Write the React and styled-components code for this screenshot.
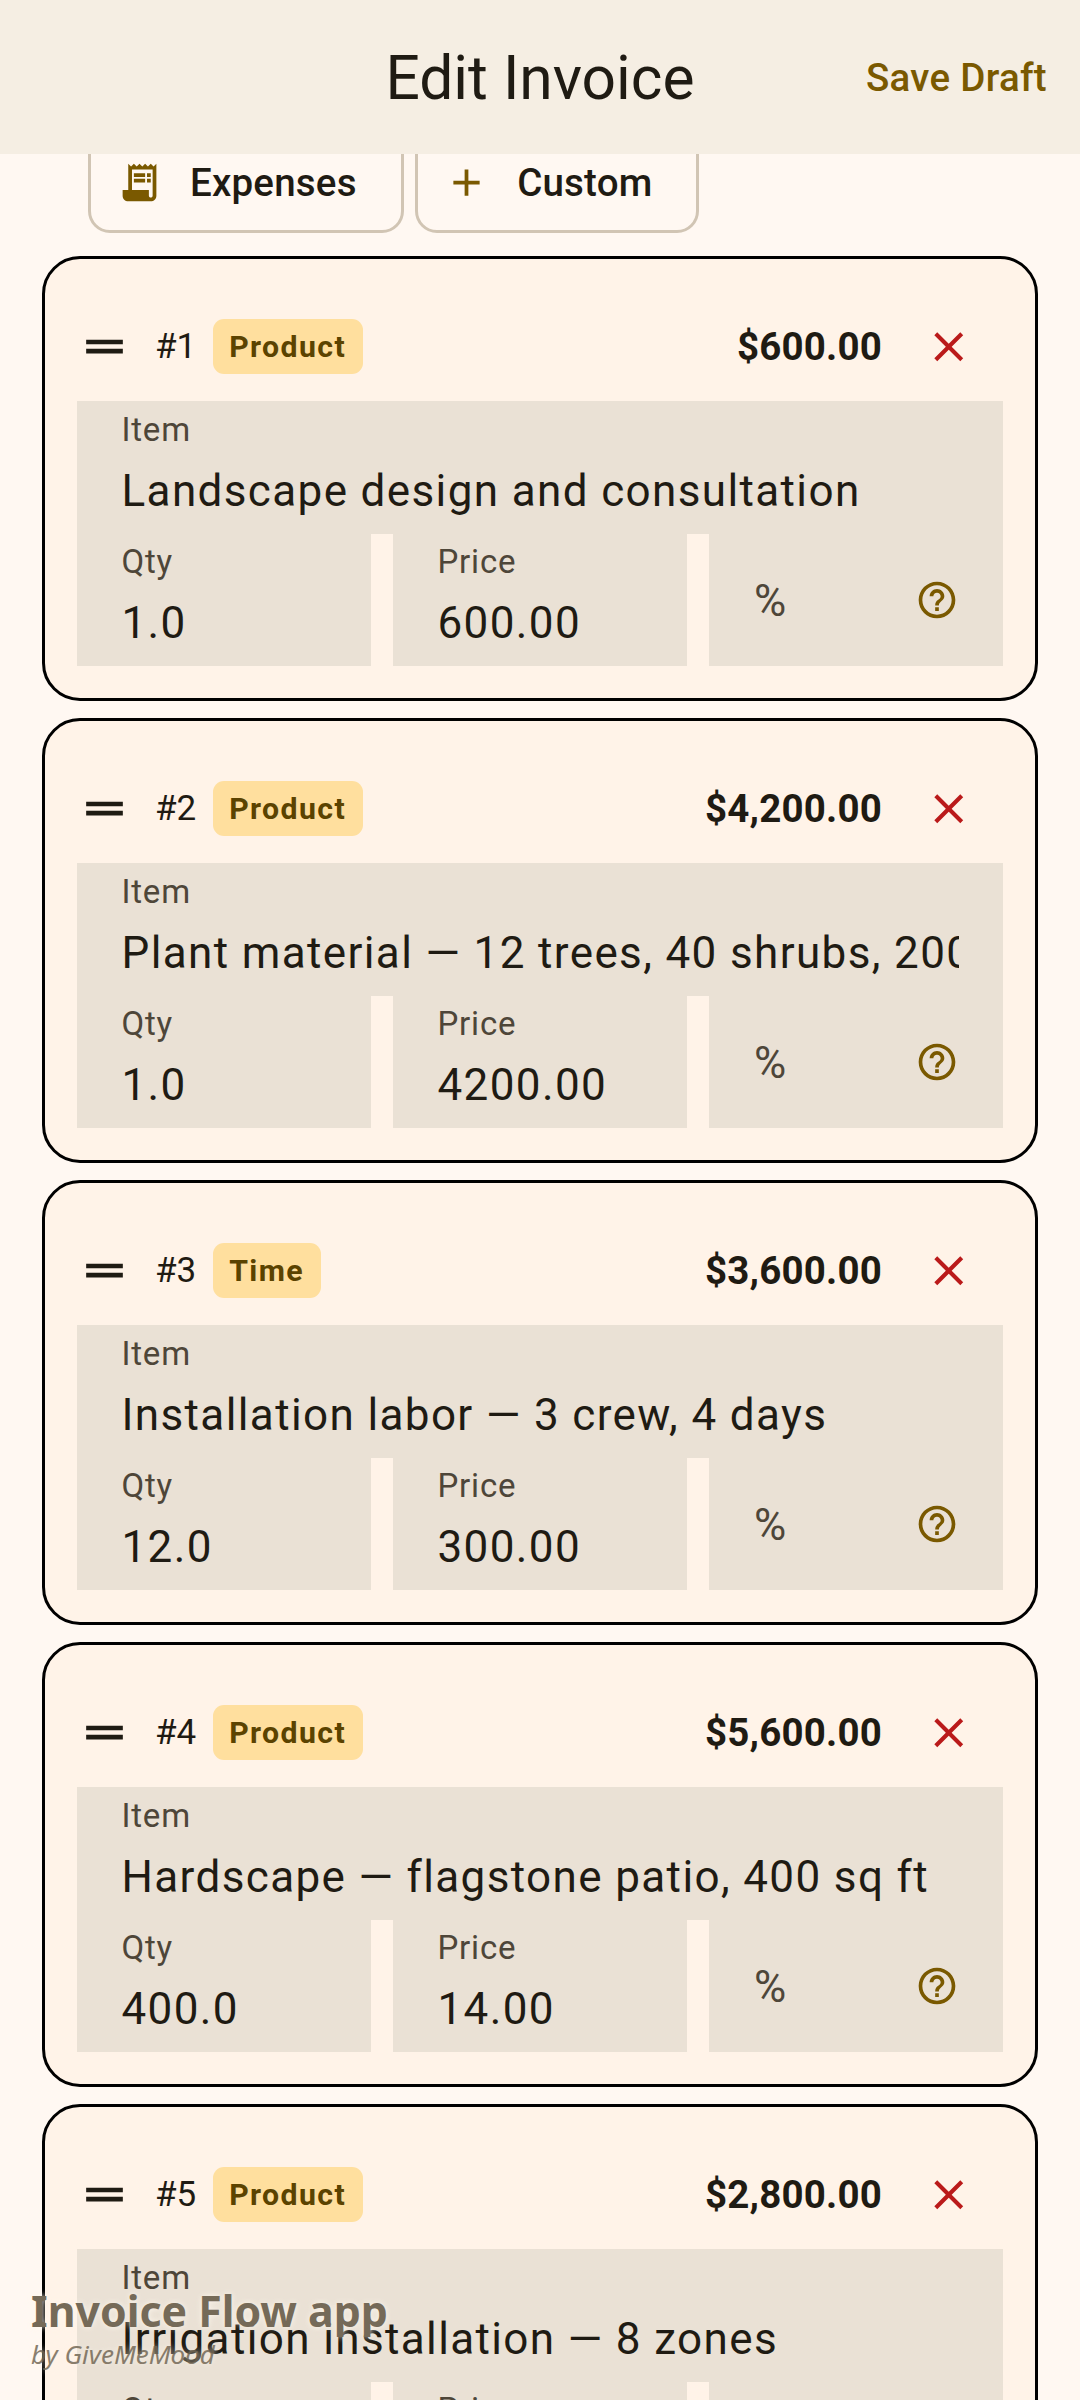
import React from "react";
import styled, { createGlobalStyle } from "styled-components";

const Global = createGlobalStyle`
  html, body { margin: 0; padding: 0; background: #fff8f2; }
  body { width: 1080px; height: 2400px; overflow: hidden; font-family: Roboto, "Liberation Sans", sans-serif; color: #1f1b13; }
  #root { height: 2400px; }
`;

const Screen = styled.div`
  position: relative;
  width: 1080px;
  height: 2400px;
  overflow: hidden;
  background: #fff8f2;
`;

const TopBar = styled.header`
  position: relative;
  z-index: 2;
  height: 154px;
  background: #f5eee3;
  display: flex;
  align-items: center;
  justify-content: center;
`;

const Title = styled.h1`
  margin: 3px 0 0;
  font-size: 60.5px;
  font-weight: 400;
  line-height: 72px;
  color: #1f1b13;
`;

const SaveDraft = styled.span`
  position: absolute;
  right: 33px;
  top: 1px;
  line-height: 154px;
  font-size: 38.5px;
  font-weight: 500;
  letter-spacing: 0.3px;
  color: #7a5900;
`;

const Chips = styled.div`
  display: flex;
  gap: 11.5px;
  margin: -22px 0 0 88px;
`;

const Chip = styled.div`
  height: 101px;
  box-sizing: border-box;
  border: 3px solid #d1c5b4;
  border-radius: 22px;
  display: flex;
  align-items: center;
  gap: 28px;
  padding: 0 44px 0 26px;
  font-size: 38.5px;
  font-weight: 500;
  letter-spacing: 0.2px;
  color: #1f1b13;
  background: #fff8f2;
`;

const List = styled.main`
  display: flex;
  flex-direction: column;
  gap: 17px;
  margin: 23px 42px 0;
`;

const Card = styled.section`
  box-sizing: border-box;
  height: 445px;
  border: 3px solid #000;
  border-radius: 38px;
  background: #fff3e8;
  padding: 0 32px;
  flex: none;
`;

const CardHead = styled.div`
  height: 142px;
  display: flex;
  align-items: center;
  padding-top: 33px;
  box-sizing: border-box;
`;

const Handle = styled.svg`
  width: 55px;
  height: 55px;
  fill: #1f1b13;
  flex: none;
`;

const Index = styled.span`
  margin-left: 23px;
  font-size: 35px;
  font-weight: 400;
  color: #1f1b13;
`;

const Badge = styled.span`
  margin-left: 16.5px;
  height: 55px;
  padding: 0 16.5px;
  border-radius: 11px;
  background: #ffdf9e;
  display: flex;
  align-items: center;
  font-size: 30.25px;
  font-weight: 700;
  letter-spacing: 1.375px;
  color: #5b4300;
`;

const Amount = styled.span`
  margin-left: auto;
  font-size: 38.5px;
  font-weight: 700;
  letter-spacing: 0.2px;
  color: #1f1b13;
`;

const Remove = styled.svg`
  width: 49.5px;
  height: 49.5px;
  margin: 0 30px 0 41.5px;
  fill: #ba1a1a;
  flex: none;
`;

const ItemField = styled.div`
  height: 133px;
  box-sizing: border-box;
  padding: 7px 44px 0 44.5px;
  background: #eae1d5;
  overflow: hidden;
`;

const Row = styled.div`
  display: grid;
  grid-template-columns: repeat(3, 294px);
  gap: 22px;
  height: 132px;
`;

const Cell = styled.div`
  box-sizing: border-box;
  padding: 6px 44px 0 44.5px;
  background: #eae1d5;
  overflow: hidden;
`;

const PercentCell = styled(Cell)`
  padding: 2px 44px 0 45px;
  display: flex;
  align-items: center;
  justify-content: space-between;
`;

const Label = styled.div`
  font-size: 33px;
  line-height: 44px;
  letter-spacing: 0.8px;
  color: #4e4639;
`;

const Value = styled.div`
  margin-top: 8.5px;
  font-size: 44px;
  line-height: 60px;
  letter-spacing: 1.375px;
  white-space: nowrap;
  overflow: hidden;
  color: #1f1b13;
`;

const Percent = styled.span`
  font-size: 44px;
  color: #4e4639;
`;

const Help = styled.svg`
  width: 44px;
  height: 44px;
  margin-top: -2px;
  fill: #7a5900;
  flex: none;
`;

const ChipIcon = styled.svg`
  width: 45px;
  height: 45px;
  fill: #7a5900;
  flex: none;
`;

const Watermark = styled.div`
  position: absolute;
  left: 31px;
  bottom: 29px;
  z-index: 3;
  color: #756a58;
  text-shadow: 0 0 6px rgba(255, 250, 240, 0.9);
  font-family: "Noto Sans", "Open Sans", sans-serif;
`;

const WatermarkTitle = styled.div`
  font-size: 42.8px;
  font-weight: 700;
  line-height: 52px;
`;

const WatermarkSub = styled.div`
  font-size: 26px;
  font-style: italic;
  line-height: 34px;
  opacity: 0.85;
`;

const items = [
  { n: 1, type: "Product", total: "$600.00", name: "Landscape design and consultation", qty: "1.0", price: "600.00" },
  { n: 2, type: "Product", total: "$4,200.00", name: "Plant material — 12 trees, 40 shrubs, 200 perennials", qty: "1.0", price: "4200.00" },
  { n: 3, type: "Time", total: "$3,600.00", name: "Installation labor — 3 crew, 4 days", qty: "12.0", price: "300.00" },
  { n: 4, type: "Product", total: "$5,600.00", name: "Hardscape — flagstone patio, 400 sq ft", qty: "400.0", price: "14.00" },
  { n: 5, type: "Product", total: "$2,800.00", name: "Irrigation installation — 8 zones", qty: "1.0", price: "2800.00" },
];

const Glyph = ({ as: C, d }) => (
  <C viewBox="0 0 24 24" aria-hidden="true">
    <path d={d} />
  </C>
);

const RECEIPT = "M19.5 3.5 18 2l-1.5 1.5L15 2l-1.5 1.5L12 2l-1.5 1.5L9 2 7.5 3.5 6 2v14H3v3c0 1.66 1.34 3 3 3h12c1.66 0 3-1.34 3-3V2l-1.5 1.5zM19 19c0 .55-.45 1-1 1s-1-.45-1-1v-3H8V5h11v14zM9 7h6v2H9zM16 7h2v2h-2zM9 10h6v2H9zM16 10h2v2h-2z";
const ADD = "M19 13h-6v6h-2v-6H5v-2h6V5h2v6h6v2z";
const DRAG = "M20 9H4v2h16V9zm0 4H4v2h16v-2z";
const CLOSE = "M19 6.41 17.59 5 12 10.59 6.41 5 5 6.41 10.59 12 5 17.59 6.41 19 12 13.41 17.59 19 19 17.59 13.41 12z";
const HELP = "M11 18h2v-2h-2v2zm1-16C6.48 2 2 6.48 2 12s4.48 10 10 10 10-4.48 10-10S17.52 2 12 2zm0 18c-4.41 0-8-3.59-8-8s3.59-8 8-8 8 3.59 8 8-3.59 8-8 8zm0-14c-2.21 0-4 1.79-4 4h2c0-1.1.9-2 2-2s2 .9 2 2c0 2-3 1.75-3 5h2c0-2.25 3-2.5 3-5 0-2.21-1.79-4-4-4z";

export default function App() {
  return (
    <Screen>
      <Global />
      <TopBar>
        <Title>Edit Invoice</Title>
        <SaveDraft>Save Draft</SaveDraft>
      </TopBar>
      <Chips>
        <Chip>
          <Glyph as={ChipIcon} d={RECEIPT} />
          Expenses
        </Chip>
        <Chip>
          <Glyph as={ChipIcon} d={ADD} />
          Custom
        </Chip>
      </Chips>
      <List>
        {items.map((it) => (
          <Card key={it.n}>
            <CardHead>
              <Glyph as={Handle} d={DRAG} />
              <Index>#{it.n}</Index>
              <Badge>{it.type}</Badge>
              <Amount>{it.total}</Amount>
              <Glyph as={Remove} d={CLOSE} />
            </CardHead>
            <ItemField>
              <Label>Item</Label>
              <Value>{it.name}</Value>
            </ItemField>
            <Row>
              <Cell>
                <Label>Qty</Label>
                <Value>{it.qty}</Value>
              </Cell>
              <Cell>
                <Label>Price</Label>
                <Value>{it.price}</Value>
              </Cell>
              <PercentCell>
                <Percent>%</Percent>
                <Glyph as={Help} d={HELP} />
              </PercentCell>
            </Row>
          </Card>
        ))}
      </List>
      <Watermark>
        <WatermarkTitle>Invoice Flow app</WatermarkTitle>
        <WatermarkSub>by GiveMeMood</WatermarkSub>
      </Watermark>
    </Screen>
  );
}
